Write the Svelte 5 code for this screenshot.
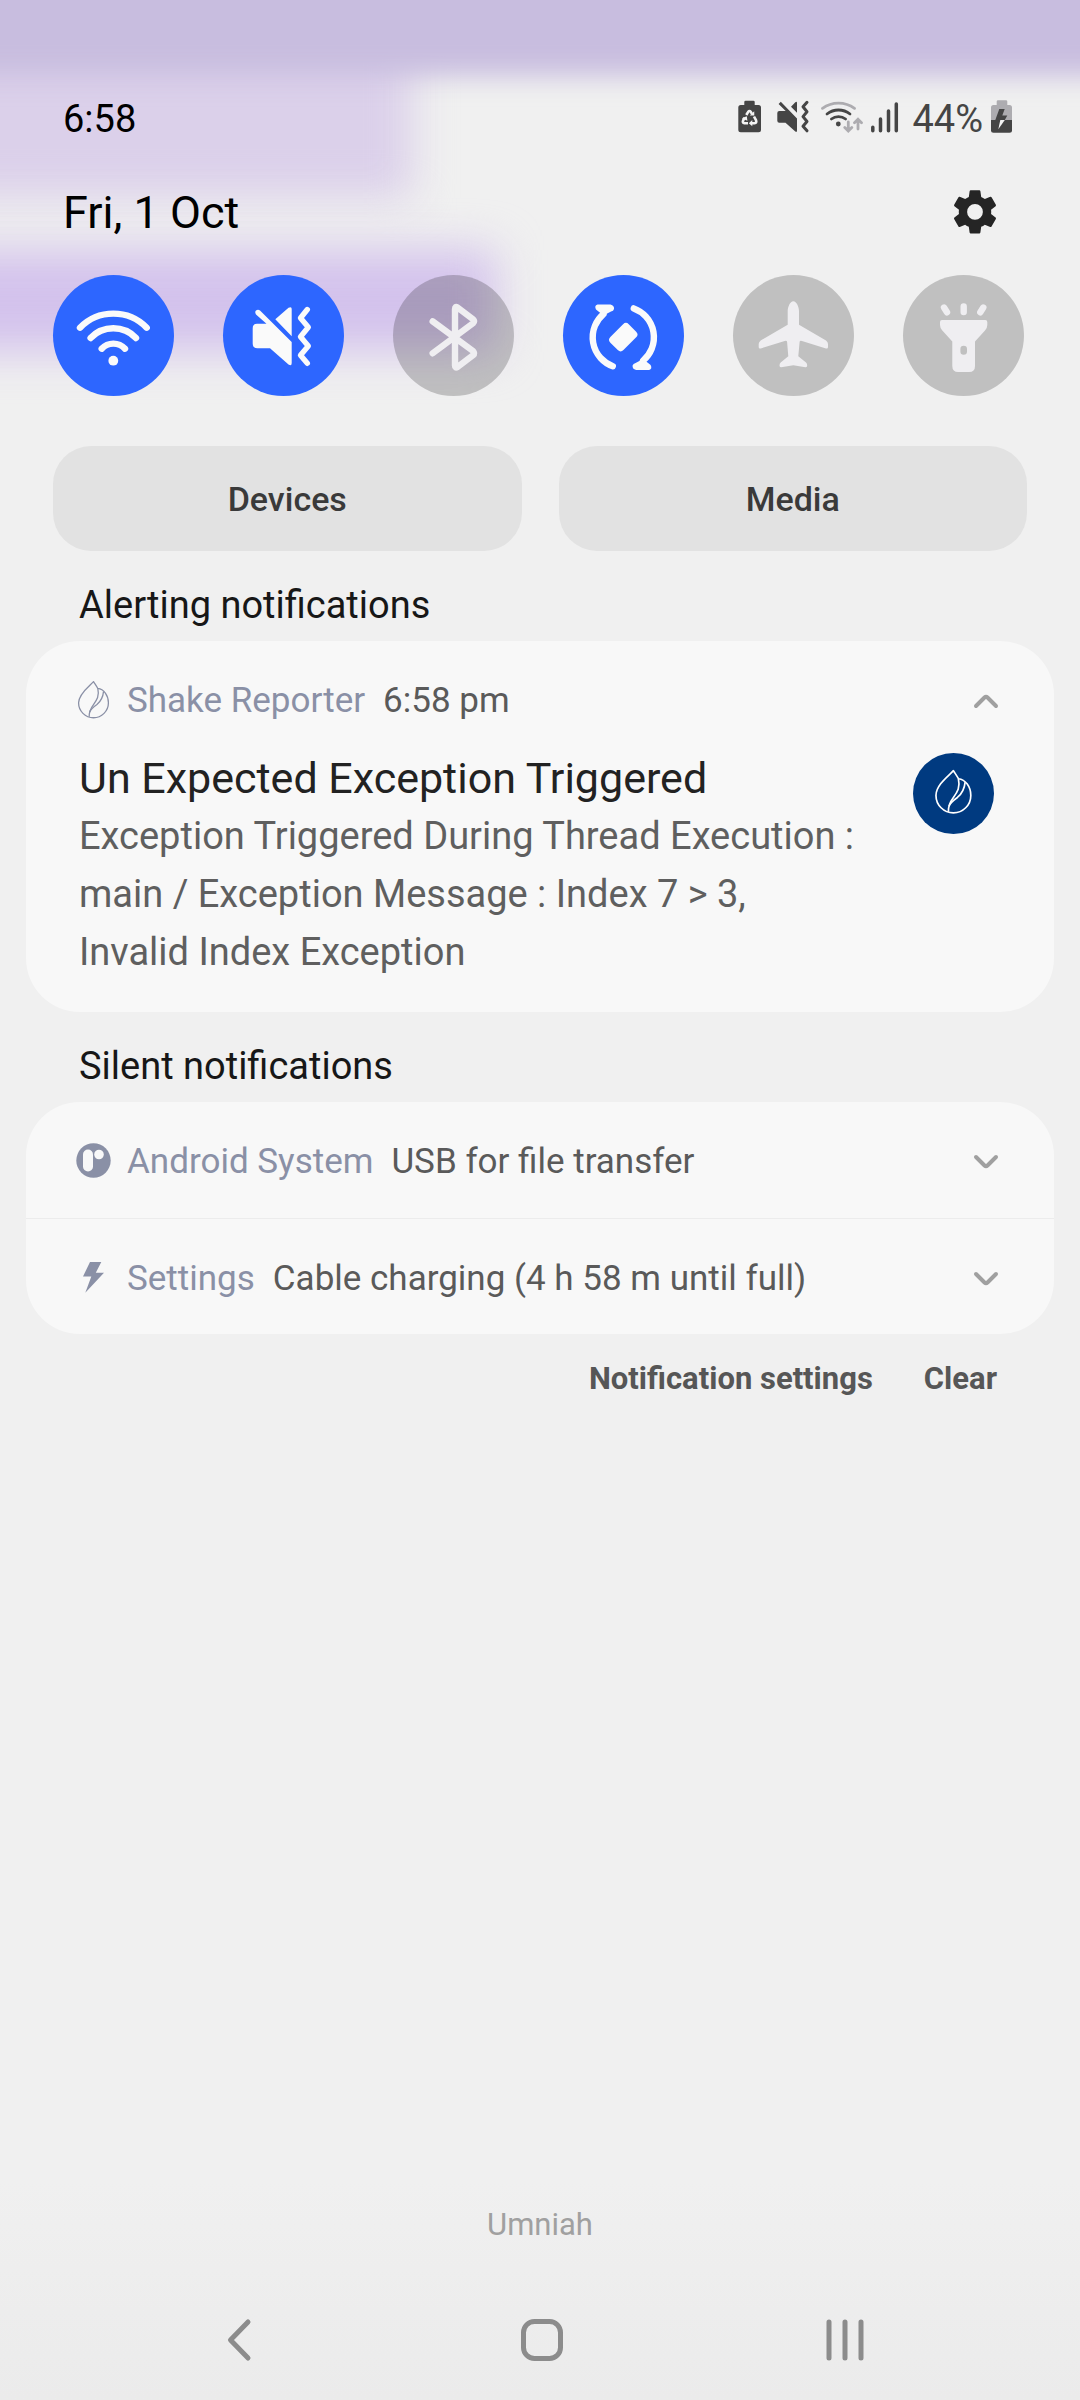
<script>
  const toggles = [
    { id: 'wifi', label: 'Wi-Fi', on: true },
    { id: 'mute', label: 'Vibrate', on: true },
    { id: 'bluetooth', label: 'Bluetooth', on: false },
    { id: 'rotate', label: 'Auto rotate', on: true },
    { id: 'plane', label: 'Flight mode', on: false },
    { id: 'torch', label: 'Torch', on: false }
  ];

  const silent = [
    { icon: 'android', app: 'Android System', text: 'USB for file transfer' },
    { icon: 'bolt', app: 'Settings', text: 'Cable charging (4 h 58 m until full)' }
  ];
</script>

{#snippet leafLines()}
  <path d="M54 2C42 16 2 44 2 76a52 52 0 0 0 104 0C106 50 90 28 69 26C65 18 59 10 54 2Z" />
  <path d="M69 26C75 52 66 66 54 82C42 98 38 108 39 125" />
  <path d="M89 36C87 58 80 70 66 82C52 92 44 98 41 108" />
{/snippet}

{#snippet chevron(up)}
  <svg class="chevron" class:up viewBox="0 0 28 20" aria-hidden="true">
    <path d="M4 5L12.5 13.5Q14 15 15.500 13.500L24 5" />
  </svg>
{/snippet}

{#snippet rotateArrow()}
  <path class="line" d="M49.800 91.200A30.700 30.700 0 0 1 40.500 39" />
  <path d="M34.500 29.500H47.500Q51.500 30.500 51 34Q50.500 36 48 36.500L40.500 40.500L33 34.500Q31 30.500 34.500 29.500Z" />
{/snippet}

<div class="screen">
  <div class="backdrop" aria-hidden="true">
    <div class="haze middle"></div>
    <div class="haze lower"></div>
    <div class="haze top"></div>
  </div>

  <header>
    <div class="status">
      <time class="clock">6:58</time>
      <div class="indicators">
        <svg width="35" height="44" viewBox="0 0 35 44" aria-hidden="true">
          <path d="M10.300 8V5Q10.300 3.700 11.600 3.700H19.400Q20.700 3.700 20.700 5V8H24.500Q27 8 27 10.500V32.800Q27 35.300 24.500 35.300H6.800Q4.300 35.300 4.300 32.800V10.500Q4.300 8 6.800 8Z" fill="#454545" />
          <g fill="none" stroke="#f4f4f4" stroke-width="2.600" stroke-linejoin="round">
            <path d="M12.300 18L14.200 14.800Q15.500 13.200 16.800 14.800L18 16.800" />
            <path d="M20 19.500L22 23.200Q23 26 20.500 26.200H17.500" />
            <path d="M14 26.200H10.500Q8 25.800 9.200 23.200L10.700 20.800" />
          </g>
          <path d="M15.800 18.400L20.300 18.600L20.200 14.300ZM18.300 23V29.300L14.800 26.200ZM7.800 21.200L12.800 19.300L13.400 23.800Z" fill="#f4f4f4" />
        </svg>
        <svg width="36" height="44" viewBox="0 0 36 44" aria-hidden="true">
          <path d="M2.300 14H8.700L1.600 6.900L3.800 4.700L20 21.500V33.500Q20 36 18 34.300L8.500 25.700H2.300Q.3 25.700 .3 23.700V16Q.3 14 2.300 14ZM14 9.700L18.300 5.300Q20 3.800 20 6V15.700Z" fill="#454545" />
          <path d="M30 5.300L26 9.800L30 14.700L26 19.600L30 24.500L26 29.300L30 33.800" fill="none" stroke="#454545" stroke-width="3" stroke-linecap="round" stroke-linejoin="round" />
        </svg>
        <svg width="42" height="44" viewBox="0 0 42 44" aria-hidden="true">
          <g fill="none" stroke-width="2.800" stroke-linecap="round">
            <path d="M1.500 11.300A27 27 0 0 1 33.500 11.300" stroke="#adacb0" />
            <path d="M6 17A18.500 18.500 0 0 1 29 17M10.400 22A11.500 11.500 0 0 1 24.600 22" stroke="#454545" />
            <path d="M27.300 25V33.500M23.800 30.500L27.300 34L30.800 30.500M37 32V23M33.500 25.800L37 22.300L40.500 25.800" stroke="#adacb0" />
          </g>
          <circle cx="17.300" cy="27" r="2.400" fill="#454545" />
        </svg>
        <svg width="33" height="44" viewBox="0 0 33 44" aria-hidden="true">
          <path d="M1.800 30.300V33.700M9.500 22V33.700M17.500 14V33.700M25.300 7V33.700" stroke="#454545" stroke-width="3.500" stroke-linecap="round" />
        </svg>
        <span>44%</span>
        <svg width="21" height="44" viewBox="0 0 21 44" aria-hidden="true">
          <path d="M5.700 8V4.500Q5.700 3.300 7 3.300H15Q16.300 3.300 16.300 4.500V8H18.500Q21 8 21 10.500V23H0V10.500Q0 8 2.500 8Z" fill="#adacb0" />
          <path d="M0 23H21V33.200Q21 35.700 18.500 35.700H2.500Q0 35.700 0 33.200Z" fill="#454545" />
          <path d="M8.300 12H13.700L11.300 18.500H16.300L13.800 23H4.300Z" fill="#454545" />
          <path d="M9.300 23H13.800L7.300 32.300Z" fill="#f4f4f4" />
        </svg>
      </div>
    </div>

    <div class="date-row">
      <time class="date">Fri, 1 Oct</time>
      <button class="gear" aria-label="Settings">
        <svg viewBox="0 0.5 24 24" aria-hidden="true">
          <path d="M19.140 12.940c.04-.3.06-.61.06-.94 0-.32-.02-.64-.07-.94l2.030-1.580c.18-.14.23-.41.12-.61l-1.920-3.320c-.12-.22-.37-.29-.59-.22l-2.390.96c-.5-.38-1.030-.7-1.620-.94l-.36-2.540c-.04-.24-.24-.41-.48-.41h-3.840c-.24 0-.43.17-.47.41l-.36 2.540c-.59.24-1.130.57-1.620.94l-2.390-.96c-.22-.08-.47 0-.59.22L2.740 8.870c-.12.21-.08.47.12.61l2.030 1.580c-.05.3-.09.63-.09.94s.02.64.07.94l-2.030 1.580c-.18.14-.23.41-.12.61l1.920 3.320c.12.22.37.29.59.22l2.390-.96c.5.38 1.030.7 1.620.94l.36 2.540c.05.24.24.41.48.41h3.840c.24 0 .44-.17.47-.41l.36-2.540c.59-.24 1.130-.56 1.620-.94l2.390.96c.22.08.47 0 .59-.22l1.920-3.320c.12-.22.07-.47-.12-.61l-2.010-1.580zM12 15.500A3.500 3.500 0 1 1 12 8.500a3.500 3.500 0 0 1 0 7z" fill="#252525" />
        </svg>
      </button>
    </div>
  </header>

  <div class="toggles">
    {#each toggles as t (t.id)}
      <button class="toggle" class:on={t.on} aria-label={t.label} aria-pressed={t.on}>
        <svg viewBox="0 0 121 121" aria-hidden="true">
          {#if t.id === 'wifi'}
            <g class="line">
              <path d="M27 52.700A46.600 46.600 0 0 1 93.700 52.700M37.600 63A31.400 31.400 0 0 1 83 63M48.700 73.700A16 16 0 0 1 72 73.700" />
            </g>
            <circle cx="60.300" cy="85.700" r="4.900" />
          {:else if t.id === 'mute'}
            <path d="M34 48.700H43.500L33 39.500Q31.500 37 33 35.500Q35 34 37 35.500L68.700 67V88Q68.700 91.500 65.500 89.500L47 73.300H34.500Q29.700 73.300 29.700 68.500V53.500Q29.700 48.700 34 48.700ZM52.300 44.300L65.500 32.800Q68.700 31 68.700 34V61.300Z" />
            <path class="line thin" d="M84.300 34.500L77.500 43L85.300 52.300L77.500 61.700L85.300 71L77.500 80.300L84.300 88.300" />
          {:else if t.id === 'bluetooth'}
            <path class="line" d="M39.700 46.300L80 76Q82 78.300 80 80.300L64.500 92Q62 93.500 62 90.500V34.300Q62 31 64.500 32.500L80 44.300Q82 46.300 80 48.300L39.700 78.300" />
          {:else if t.id === 'rotate'}
            {@render rotateArrow()}
            <g transform="rotate(180 60.300 62.300)">{@render rotateArrow()}</g>
            <rect x="51" y="49.200" width="18.500" height="26" rx="4" transform="rotate(45 60.300 62.200)" />
          {:else if t.id === 'plane'}
            <path d="M60.300 26.300C63.500 26.300 66 32 66 36V49.700L93 65.500Q95 67 95 69V72Q95 74 93 73.500L69 66Q66.700 65.400 66.600 67L65.300 81.300L73 87.500Q74.200 88.700 74.200 90.500Q74.200 92.500 72.500 92.300L60.300 90.300L48.200 92.300Q46.500 92.500 46.500 90.500Q46.500 88.700 47.700 87.500L55.300 81.300L54.100 67Q54 65.400 51.700 66L27.700 73.500Q25.700 74 25.700 72V69Q25.700 67 27.700 65.500L54.700 49.700V36C54.700 32 57.200 26.300 60.300 26.300Z" />
          {:else}
            <path fill-rule="evenodd" d="M39 45H82.300Q84.300 45 84.300 47V50Q84.300 53 82 55.500L72 66.500V91Q72 97 66 97H55.300Q49.300 97 49.300 91V66.500L39.300 55.500Q37 53 37 50V47Q37 45 39 45ZM57.400 74V76.500A3.300 3.300 0 0 0 64 76.500V74A3.300 3.300 0 0 0 57.400 74Z" />
            <path class="line" d="M60.700 31.500V37M41 32.500L44 37.300M80.300 32.500L77.300 37.300" />
          {/if}
        </svg>
      </button>
    {/each}
  </div>

  <div class="panels">
    <button>Devices</button>
    <button>Media</button>
  </div>

  <main>
    <h2>Alerting notifications</h2>
    <section class="card">
      <div class="row">
        <svg class="app-icon" viewBox="0 0 36 42" aria-hidden="true">
          <g class="leaf" transform="translate(2 1) scale(.287)">{@render leafLines()}</g>
        </svg>
        <span class="app">Shake Reporter</span>
        <time class="summary">6:58 pm</time>
        <button class="expand" aria-label="Collapse">{@render chevron(true)}</button>
      </div>
      <div class="detail">
        <div class="message">
          <h3>Un Expected Exception Triggered</h3>
          <p>Exception Triggered During Thread Execution : main / Exception Message : Index 7 &gt; 3,<br />Invalid Index Exception</p>
        </div>
        <svg class="avatar" viewBox="0 0 81 81" aria-hidden="true">
          <circle cx="40.500" cy="40.500" r="40.500" fill="#003a80" />
          <g class="leaf light" transform="translate(22.300 17) scale(.335)">{@render leafLines()}</g>
        </svg>
      </div>
    </section>

    <h2>Silent notifications</h2>
    <section class="card">
      {#each silent as n (n.app)}
        <div class="row slim">
          <svg class="app-icon" viewBox="0 0 36 42" aria-hidden="true">
            {#if n.icon === 'android'}
              <circle cx="17.500" cy="19.500" r="17.200" fill="#8a90a6" />
              <rect x="7" y="8.500" width="10" height="22" rx="5" fill="#f8f8f8" />
              <circle cx="23" cy="13.500" r="4.800" fill="#f8f8f8" />
            {:else}
              <path d="M14 4H25.300L19.800 14.700H28L9.300 34.800L15.300 18.500H7Z" fill="#8a90a6" />
            {/if}
          </svg>
          <span class="app">{n.app}</span>
          <span class="summary">{n.text}</span>
          <button class="expand" aria-label="Expand">{@render chevron(false)}</button>
        </div>
      {/each}
    </section>

    <div class="actions">
      <button>Notification settings</button>
      <button>Clear</button>
    </div>
  </main>

  <footer>
    <p class="carrier">Umniah</p>
    <nav>
      <button aria-label="Back">
        <svg viewBox="0 0 44 44" aria-hidden="true"><path d="M31 4L13.500 22L31 40" /></svg>
      </button>
      <button aria-label="Home">
        <svg viewBox="0 0 44 44" aria-hidden="true"><rect x="3.500" y="3.500" width="37" height="37" rx="11" /></svg>
      </button>
      <button aria-label="Recent apps">
        <svg viewBox="0 0 44 44" aria-hidden="true"><path d="M6 4V40M22 4V40M38 4V40" /></svg>
      </button>
    </nav>
  </footer>
</div>

<style>
  :global(body) {
    margin: 0;
    background: #f0f0f0;
  }

  .screen {
    position: relative;
    isolation: isolate;
    box-sizing: border-box;
    display: flex;
    flex-direction: column;
    min-height: 100vh;
    padding-top: 97px;
    background: linear-gradient(to top, #ebebeb 0, #f0f0f0 220px);
    color: #000;
    font-family: Roboto, 'Liberation Sans', sans-serif;
    font-size: 38px;
    line-height: 44px;
  }

  button {
    display: flex;
    align-items: center;
    justify-content: center;
    margin: 0;
    padding: 0;
    border: 0;
    background: none;
    color: inherit;
    font: inherit;
    cursor: pointer;
  }

  svg {
    display: block;
    flex: none;
  }

  h2,
  h3,
  p {
    margin: 0;
    font-weight: 400;
  }

  .backdrop {
    position: absolute;
    inset: 0;
    z-index: -1;
    overflow: hidden;
  }

  .haze {
    position: absolute;
    left: -80px;
  }

  .haze.top {
    top: -80px;
    right: -80px;
    height: 156px;
    background: #c8bddf;
    filter: blur(13px);
  }

  .haze.middle {
    top: 40px;
    width: 492px;
    height: 158px;
    background: #dbd0ea;
    filter: blur(20px);
  }

  .haze.lower {
    top: 250px;
    width: 576px;
    height: 102px;
    background: #d3c2ec;
    filter: blur(22px);
  }

  .status,
  .date-row {
    display: flex;
    align-items: center;
    justify-content: space-between;
    padding: 0 68px 0 63px;
  }

  .indicators {
    display: flex;
    align-items: center;
    gap: 8px;
    color: #454545;
  }

  .date-row {
    height: 52px;
    margin-top: 46px;
    padding-right: 78px;
    font-size: 45px;
    line-height: 52px;
  }

  .gear svg {
    width: 54px;
    height: 54px;
  }

  .toggles {
    display: flex;
    justify-content: space-between;
    margin-top: 36px;
    padding: 0 56px 0 53px;
  }

  .toggle {
    width: 121px;
    height: 121px;
    border-radius: 50%;
    background: rgba(0, 0, 0, 0.2);
    color: #efeef1;
  }

  .toggle.on {
    background: #2d66ff;
    color: #fafafa;
  }

  .toggle svg {
    width: 121px;
    height: 121px;
    fill: currentColor;
  }

  .toggle .line {
    fill: none;
    stroke: currentColor;
    stroke-width: 6.4;
    stroke-linecap: round;
    stroke-linejoin: round;
  }

  .toggle .thin {
    stroke-width: 5.4;
  }

  .panels {
    display: grid;
    grid-template-columns: 1fr 1fr;
    gap: 37px;
    margin-top: 50px;
    padding: 0 53px;
  }

  .panels button {
    height: 105px;
    border-radius: 38px;
    background: #e2e2e2;
    color: #3a3a3a;
    font-size: 34px;
    font-weight: 500;
  }

  main {
    padding: 0 26px;
  }

  h2 {
    margin: 32px 53px 14px;
    color: #171717;
    font-size: 38px;
    line-height: 44px;
  }

  .card {
    border-radius: 54px;
    background: #f8f8f8;
  }

  .row {
    display: flex;
    align-items: center;
    padding: 39px 54px 0 50px;
    font-size: 35px;
    line-height: 42px;
  }

  .row.slim {
    padding-bottom: 35px;
  }

  .slim + .slim {
    padding-bottom: 34px;
    border-top: 1px solid #ececec;
  }

  .app-icon {
    width: 36px;
    height: 42px;
    margin-right: 15px;
  }

  .app {
    margin-right: 18px;
    color: #8a90a6;
  }

  .summary {
    color: #5a5a5a;
  }

  .expand {
    margin-left: auto;
  }

  .chevron {
    width: 28px;
    height: 20px;
    fill: none;
    stroke: #a0a0a0;
    stroke-width: 4;
    stroke-linecap: round;
  }

  .chevron.up {
    transform: rotate(180deg);
  }

  .detail {
    display: flex;
    justify-content: space-between;
    gap: 44px;
    padding: 31px 60px 31px 53px;
  }

  .message {
    flex: 1;
  }

  h3 {
    margin-bottom: 4px;
    color: #222;
    font-size: 43px;
    line-height: 50px;
  }

  .message p {
    color: #5f5f5f;
    font-size: 38px;
    line-height: 58px;
  }

  .avatar {
    width: 81px;
    height: 81px;
  }

  .leaf {
    fill: none;
    stroke: #8a90a6;
    stroke-width: 4.5;
    stroke-linejoin: round;
  }

  .leaf.light {
    stroke: #fff;
    stroke-width: 5;
  }

  .actions {
    display: flex;
    justify-content: flex-end;
    gap: 51px;
    margin-top: 26px;
    padding: 0 57px;
    color: #565656;
    font-size: 31px;
    font-weight: 700;
    line-height: 38px;
  }

  footer {
    margin-top: auto;
  }

  .carrier {
    color: #a0a0a0;
    font-size: 31px;
    line-height: 38px;
    text-align: center;
  }

  nav {
    display: grid;
    grid-template-columns: repeat(3, 1fr);
    margin-top: 36px;
    padding: 0 84px 0 87px;
  }

  nav button {
    height: 120px;
  }

  nav svg {
    width: 44px;
    height: 44px;
    fill: none;
    stroke: #8c8c8c;
    stroke-width: 5;
    stroke-linecap: round;
    stroke-linejoin: round;
  }
</style>
